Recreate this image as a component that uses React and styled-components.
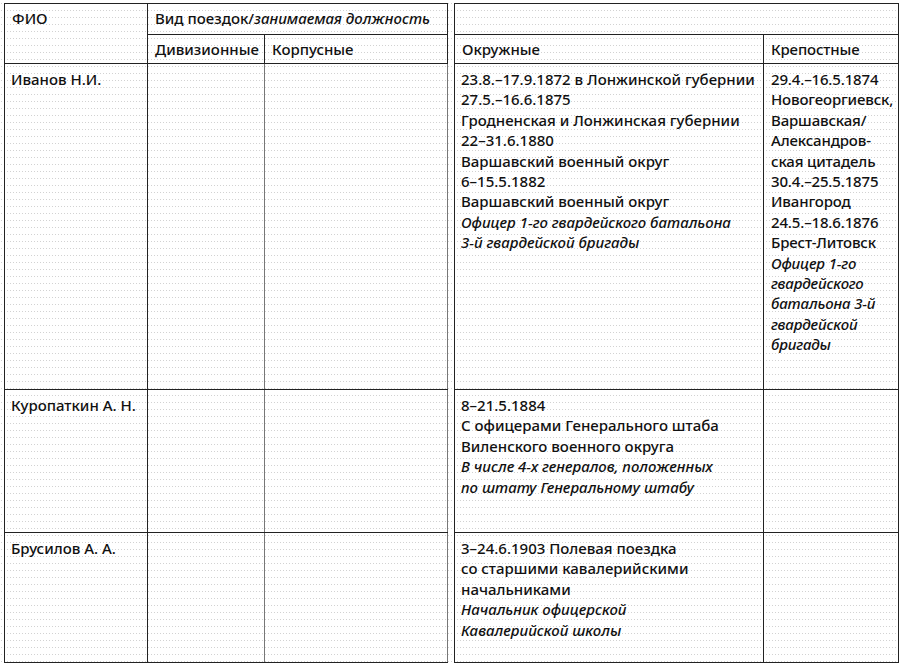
import React from "react";
import styled, { createGlobalStyle } from "styled-components";

const Global = createGlobalStyle`
  html, body { margin: 0; padding: 0; background: #fff; }
  body { font-family: "Noto Sans", "DejaVu Sans", sans-serif; color: #111; }
`;

const Page = styled.div`
  display: flex;
  align-items: flex-start;
  gap: 6px;
  padding: 3px 3px 0 4px;
  width: 900px;
  height: 665px;
  box-sizing: border-box;
  background-color: #fff;
  background-image: radial-gradient(circle, #d2d2d2 0.55px, transparent 0.9px);
  background-size: 3px 7px;
`;

const Table = styled.table`
  border-collapse: collapse;
  table-layout: fixed;
  width: ${(p) => p.$w}px;
  border: 1px solid #222;
  font-size: 15px;
  font-weight: 500;
  line-height: 20.4px;
`;

const Row = styled.tr`
  height: ${(p) => p.$h}px;
`;

const Cell = styled.td`
  vertical-align: top;
  padding: ${(p) => (p.$head ? "4px 7px 0" : "5px 6px 0")};
  border-top: 1px solid #222;
  border-bottom: 1px solid #222;
  border-left: 1px solid ${(p) => (p.$soft ? "#777" : "#222")};
  border-right: 1px solid ${(p) => (p.$soft ? "#777" : "#222")};
  white-space: nowrap;
  overflow: visible;
  ${(p) => p.$narrow && "padding-left: 7px; padding-right: 2px; letter-spacing: -0.15px;"}
`;

const Line = styled.div`
  font-style: ${(p) => (p.$it ? "italic" : "normal")};
`;

const Em = styled.span`
  font-style: italic;
`;

const Lines = ({ items }) =>
  items.map((t, i) =>
    typeof t === "string" ? <Line key={i}>{t}</Line> : <Line key={i} $it>{t.it}</Line>
  );

const okr = [
  [
    "23.8.–17.9.1872 в Лонжинской губернии",
    "27.5.–16.6.1875",
    "Гродненская и Лонжинская губернии",
    "22–31.6.1880",
    "Варшавский военный округ",
    "6–15.5.1882",
    "Варшавский военный округ",
    { it: "Офицер 1-го гвардейского батальона" },
    { it: "3-й гвардейской бригады" },
  ],
  [
    "8–21.5.1884",
    "С офицерами Генерального штаба",
    "Виленского военного округа",
    { it: "В числе 4-х генералов, положенных" },
    { it: "по штату Генеральному штабу" },
  ],
  [
    "3–24.6.1903 Полевая поездка",
    "со старшими кавалерийскими",
    "начальниками",
    { it: "Начальник офицерской" },
    { it: "Кавалерийской школы" },
  ],
];

const krep = [
  [
    "29.4.–16.5.1874",
    "Новогеоргиевск,",
    "Варшавская/",
    "Александров-",
    "ская цитадель",
    "30.4.–25.5.1875",
    "Ивангород",
    "24.5.–18.6.1876",
    "Брест-Литовск",
    { it: "Офицер 1-го" },
    { it: "гвардейского" },
    { it: "батальона 3-й" },
    { it: "гвардейской" },
    { it: "бригады" },
  ],
  [],
  [],
];

const names = ["Иванов Н.И.", "Куропаткин А. Н.", "Брусилов А. А."];
const heights = [326, 143, 130];

export default function App() {
  return (
    <>
      <Global />
      <Page>
        <Table $w={443}>
          <colgroup>
            <col style={{ width: 143 }} />
            <col style={{ width: 117 }} />
            <col style={{ width: 183 }} />
          </colgroup>
          <tbody>
            <Row $h={31}>
              <Cell $head rowSpan={2}>ФИО</Cell>
              <Cell $head colSpan={2}>
                Вид поездок/<Em>занимаемая должность</Em>
              </Cell>
            </Row>
            <Row $h={29}>
              <Cell $head>Дивизионные</Cell>
              <Cell $head>Корпусные</Cell>
            </Row>
            {names.map((n, i) => (
              <Row key={n} $h={heights[i]}>
                <Cell>{n}</Cell>
                <Cell $soft />
                <Cell $soft />
              </Row>
            ))}
          </tbody>
        </Table>
        <Table $w={444}>
          <colgroup>
            <col style={{ width: 309 }} />
            <col style={{ width: 135 }} />
          </colgroup>
          <tbody>
            <Row $h={31}>
              <Cell $head colSpan={2} />
            </Row>
            <Row $h={29}>
              <Cell $head>Окружные</Cell>
              <Cell $head $narrow>Крепостные</Cell>
            </Row>
            {okr.map((o, i) => (
              <Row key={i} $h={heights[i]}>
                <Cell>
                  <Lines items={o} />
                </Cell>
                <Cell $narrow>
                  <Lines items={krep[i]} />
                </Cell>
              </Row>
            ))}
          </tbody>
        </Table>
      </Page>
    </>
  );
}
